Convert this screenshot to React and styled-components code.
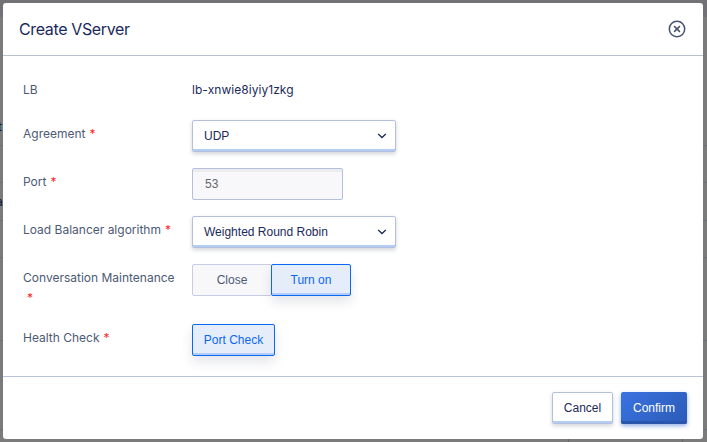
import React from "react";
import styled, { createGlobalStyle, css } from "styled-components";

const Global = createGlobalStyle`
  * { box-sizing: border-box; }
  body { margin: 0; overflow: hidden; background: #7a7a7a; }
  button, input { font: inherit; margin: 0; }
`;

const Page = styled.div`
  position: relative;
  width: 707px;
  height: 442px;
  overflow: hidden;
  background: #7b7b7b;
  font-family: Inter, sans-serif;
  font-size: 12px;
  color: #0c1633;
`;

const TopBand = styled.div`
  height: 17px;
  margin-bottom: 92px;
  background: #717176;
`;

const TableRow = styled.div`
  display: flex;
  align-items: center;
  height: ${(p) => p.$h}px;
  border-bottom: 1px solid #6c6f7c;
  line-height: 20px;
`;

const Clipped = styled.span`
  margin-left: ${(p) => p.$shift}px;
`;

const FootCells = styled.div`
  display: flex;
  height: 12px;
`;

const FootCell = styled.div`
  width: ${(p) => p.$w}px;
  border-right: 1px solid #66676b;
`;

const Dialog = styled.section`
  position: absolute;
  top: 3px;
  left: 3px;
  width: 700px;
  height: 436px;
  display: flex;
  flex-direction: column;
  background: #fff;
  border-radius: 3px;
`;

const Header = styled.header`
  display: flex;
  flex-shrink: 0;
  align-items: center;
  justify-content: space-between;
  height: 53px;
  padding: 0 17px 0 16px;
  border-bottom: 1px solid #b7c0cc;
`;

const Title = styled.h1`
  margin: 0;
  font-size: 16px;
  font-weight: 400;
  line-height: 24px;
  letter-spacing: -0.37px;
  color: #1b2a5b;
`;

const CloseButton = styled.button`
  display: flex;
  padding: 0;
  border: 0;
  background: none;
  color: #45536f;
`;

const Body = styled.div`
  display: flex;
  flex: 1;
  flex-direction: column;
  gap: 16px;
  padding: 20px 20px 0;
`;

const Field = styled.div`
  display: flex;
  align-items: flex-start;
  min-height: ${(p) => p.$min || 32}px;
`;

const Label = styled.label`
  width: 169px;
  padding: 4px 12px 0 0;
  line-height: 20px;
  color: #4c5a75;
`;

const Star = styled.span`
  display: inline-block;
  margin-left: 4px;
  color: #ff1f1f;
`;

const Value = styled.span`
  padding-top: 4px;
  line-height: 20px;
  letter-spacing: 0.05px;
  color: #1b2a5b;
`;

const control = css`
  display: flex;
  align-items: center;
  height: 32px;
  border: 1px solid #b4c0da;
  border-radius: 2px;
  font-family: "Liberation Sans", Arial, sans-serif;
  font-size: 12px;
  line-height: 20px;
`;

const Select = styled.button`
  ${control}
  justify-content: space-between;
  width: 204px;
  padding: 0 8px 0 11px;
  background: #fff;
  color: #1b2a5b;
  box-shadow: inset 0 -2px 0 #b3cdf8, 0 2px 4px rgba(30, 40, 70, 0.2);
`;

const Input = styled.input`
  ${control}
  width: 151px;
  padding: 0 12px;
  background: #f8f8fb;
  color: #666;
  box-shadow: inset 0 3px 0 #ebebf0;
`;

const Choice = styled.button`
  ${control}
  justify-content: center;
  width: ${(p) => p.$w}px;
  padding: 0;
  background: #f8f8fb;
  border-color: #c9cce6;
  color: #4c5a75;
  ${(p) =>
    p.$on &&
    css`
      position: relative;
      background: #e5edfb;
      border-color: #0a68f4;
      color: #0a68f4;
      box-shadow: inset 0 -2px 0 #b3cdf8, 0 6px 12px rgba(30, 40, 70, 0.12);
    `}
  & + & {
    margin-left: -1px;
  }
`;

const Footer = styled.footer`
  display: flex;
  flex-shrink: 0;
  justify-content: flex-end;
  gap: 8px;
  height: 63px;
  padding: 15px 16px 0 0;
  border-top: 1px solid #b7c4da;
`;

const Action = styled.button`
  ${control}
  justify-content: center;
  width: 61px;
  padding: 0;
  background: #fff;
  color: #1b2a5b;
  box-shadow: inset 0 -2px 0 #b3cdf8, 0 2px 4px rgba(30, 40, 70, 0.2);
  ${(p) =>
    p.$primary &&
    css`
      width: 66px;
      border: 0;
      background: linear-gradient(135deg, #3a72e0, #2b5bb8);
      color: #fff;
      box-shadow: inset 0 -3px 0 #2a55ad, 0 2px 4px rgba(43, 96, 210, 0.5);
    `}
`;

const CloseIcon = () => (
  <svg width="18" height="18" viewBox="0 0 18 18" fill="none" stroke="currentColor" strokeWidth="1.5">
    <circle cx="9" cy="9" r="7.7" />
    <path d="M6.1 6.1l5.8 5.8M11.9 6.1l-5.8 5.8" />
  </svg>
);

const Chevron = () => (
  <svg width="10" height="6" viewBox="0 0 10 6" fill="none" stroke="currentColor" strokeWidth="1.3">
    <path d="M1.2 1L5 4.5 8.8 1" />
  </svg>
);

const FormRow = ({ label, required, min, children }) => (
  <Field $min={min}>
    <Label>
      {label}
      {required && <Star>*</Star>}
    </Label>
    {children}
  </Field>
);

export default function App() {
  return (
    <Page>
      <Global />
      <TopBand />
      <TableRow $h={37}><Clipped $shift={-2}>t</Clipped></TableRow>
      <TableRow $h={37} />
      <TableRow $h={38}><Clipped $shift={-4}>a</Clipped></TableRow>
      <TableRow $h={37} />
      <TableRow $h={83} />
      <TableRow $h={89} />
      <FootCells>
        <FootCell $w={569} />
        <FootCell $w={114} />
      </FootCells>
      <Dialog>
        <Header>
          <Title>Create VServer</Title>
          <CloseButton aria-label="Close dialog"><CloseIcon /></CloseButton>
        </Header>
        <Body>
          <FormRow label="LB" min={28}><Value>lb-xnwie8iyiy1zkg</Value></FormRow>
          <FormRow label="Agreement" required><Select>UDP<Chevron /></Select></FormRow>
          <FormRow label="Port" required><Input defaultValue="53" /></FormRow>
          <FormRow label="Load Balancer algorithm" required>
            <Select>Weighted Round Robin<Chevron /></Select>
          </FormRow>
          <FormRow label="Conversation Maintenance" required>
            <Choice $w={80}>Close</Choice>
            <Choice $w={80} $on>Turn on</Choice>
          </FormRow>
          <FormRow label="Health Check" required><Choice $w={83} $on>Port Check</Choice></FormRow>
        </Body>
        <Footer>
          <Action>Cancel</Action>
          <Action $primary>Confirm</Action>
        </Footer>
      </Dialog>
    </Page>
  );
}
